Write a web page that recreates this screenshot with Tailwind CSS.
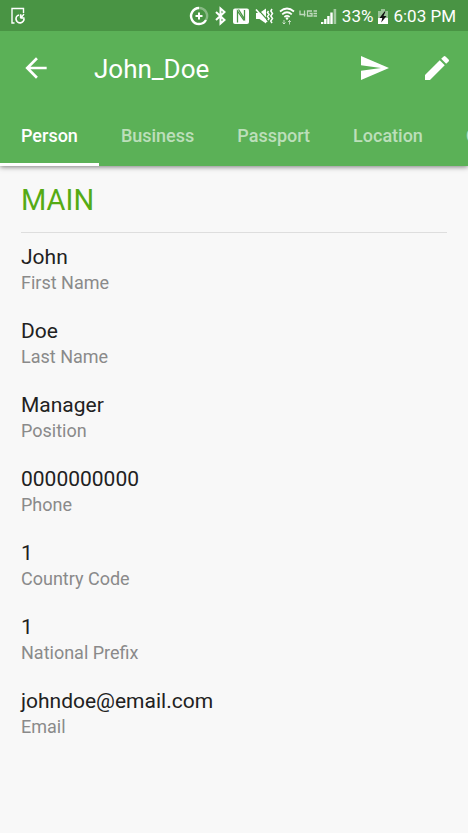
<!DOCTYPE html>
<html lang="en">
<head>
<meta charset="utf-8">
<meta name="viewport" content="width=device-width, initial-scale=1">
<title>John_Doe</title>
<script src="https://cdn.jsdelivr.net/npm/@tailwindcss/browser@4"></script>
</head>
<body class="min-h-screen overflow-x-hidden bg-[#f8f8f8] font-[Roboto,sans-serif] text-[#212121]">
<header class="bg-[#5bb157] text-white shadow-[0_1px_5px_rgba(0,0,0,0.5)]">
  <div class="flex h-[31px] items-center justify-between bg-[#499444] pr-3 pl-[11px]">
    <svg class="h-[18px] w-[15px]" viewBox="0 0 15 18" fill="none" stroke="#fff" stroke-width="1.4" aria-hidden="true">
      <path d="M3.5 16H1V1.5h11.500V6"/>
      <path d="M8 8A4 4 0 1 0 13 11.500" stroke-width="1.700"/>
      <path d="M9.500 11V7.200M9.500 11h0M10 11l3-4M10 7.500V11h3.500" stroke-width="1.300"/>
    </svg>
    <div class="flex items-center gap-1">
      <svg class="h-5 w-5" viewBox="0 0 20 20" fill="none" stroke="#fff" aria-hidden="true">
        <path d="M10 2A8 8 0 0 1 17 14" stroke-width="2.400" stroke-opacity=".35"/>
        <path d="M10 2A8 8 0 1 0 17 14" stroke-width="2.400"/>
        <path d="M10 6.500v7M6.500 10h7" stroke-width="2"/>
      </svg>
      <svg class="h-5 w-[15px]" viewBox="0 0 15 20" fill="none" stroke="#fff" stroke-width="2" aria-hidden="true">
        <path d="M3 6l8.500 8-4 3.500v-15l4 3.500L3 14"/>
      </svg>
      <svg class="h-5 w-[18px]" viewBox="0 0 18 20" aria-hidden="true">
        <rect x="1" y="2.500" width="16" height="15.500" rx="2" fill="#fff"/>
        <path d="M5.500 16.500V5l6.500 9.500M6.500 3.500L12.500 13V4" fill="none" stroke="#499444" stroke-width="1.300"/>
      </svg>
      <svg class="h-5 w-[21px]" viewBox="0 0 21 20" fill="none" stroke="#fff" aria-hidden="true">
        <path d="M2 7h3.500L12 2.500v15L5.500 13H2z" fill="#fff" stroke="none"/>
        <path d="M3 2.500l11 12" stroke="#499444" stroke-width="1.200"/>
        <path d="M2 3.500l11 12.500" stroke-width="1.700"/>
        <path d="M14.500 5l-1 1.500 1.500 2-1.500 2 1.500 2-1 1.500M18 3l-1.200 2 1.700 2.500-1.700 2.500 1.700 2.500-1.700 2.500 1.200 2" stroke-width="1.500"/>
      </svg>
      <svg class="h-5 w-4" viewBox="0 0 16 20" fill="none" stroke="#fff" stroke-width="1.700" aria-hidden="true">
        <path d="M1 5.500Q8-.5 15 5.500M3.200 8.300Q8 4.200 12.800 8.300M5.400 11Q8 8.800 10.600 11"/>
        <circle cx="8" cy="12.500" r="1.200" fill="#fff" stroke="none"/>
        <path d="M5 14v4M3.500 16.500L5 18l1.500-1.500M10.500 18.500v-4M9 16l1.500-1.500L12 16" stroke-width="1" stroke-opacity=".65"/>
      </svg>
      <svg class="h-5 w-[18px]" viewBox="0 0 18 20" fill="none" stroke="#fff" stroke-opacity=".65" stroke-width="1.300" role="img" aria-label="4G LTE">
        <path d="M1 4.500v4h5.500M5.500 4.500v6M13 5H8.500v5H13V7.500h-2.500M14.500 5H18M14.500 7.500H18M14.500 10H18"/>
      </svg>
      <svg class="h-5 w-[17px]" viewBox="0 0 17 20" fill="#fff" aria-hidden="true">
        <path d="M0 16h2.400v2H0zM3.100 13h2.400v5H3.100zM6.200 10h2.400v8H6.200zM9.300 6.500h2.400V18H9.300z"/>
        <path d="M12.600 3h2.600v15h-2.600z" fill-opacity=".5"/>
      </svg>
      <span class="text-[17px] leading-5">33%</span>
      <svg class="h-5 w-3" viewBox="0 0 12 20" aria-hidden="true">
        <path d="M4 3h4v2h3v7H1V5h3z" fill="#fff" fill-opacity=".45"/>
        <path d="M1 12h10v6H1z" fill="#fff"/>
        <path d="M7.500 5.500L2.500 12H5.300L4.200 16.500 9.500 10H6.500L8.500 5.500z" fill="#111"/>
      </svg>
      <time class="text-[17px] leading-5">6:03 PM</time>
    </div>
  </div>
  <div class="flex h-[73px] items-center pr-[15px] pl-5">
    <button type="button" aria-label="Back">
      <svg class="size-8" viewBox="0 0 24 24" fill="#fff"><path d="M20 11H7.830l5.590-5.590L12 4l-8 8 8 8 1.410-1.410L7.830 13H20v-2z"/></svg>
    </button>
    <h1 class="flex-1 pt-[2px] pl-[42px] text-[26px] leading-8">John_Doe</h1>
    <div class="flex items-center gap-[30px]">
      <button type="button" aria-label="Send">
        <svg class="size-8" viewBox="0 0 24 24" fill="#fff"><path d="M1.500 21L22.500 12 1.500 3v7l15 2-15 2z"/></svg>
      </button>
      <button type="button" aria-label="Edit">
        <svg class="size-8" viewBox="0 0 24 24" fill="#fff"><path d="M3 17.250V21h3.750L17.810 9.940l-3.750-3.750L3 17.250zM20.710 7.040a1 1 0 0 0 0-1.410l-2.340-2.340a1 1 0 0 0-1.410 0l-1.830 1.830 3.750 3.750 1.830-1.830z"/></svg>
      </button>
    </div>
  </div>
  <nav class="flex h-[62px] gap-px overflow-hidden text-[18px] leading-6 font-medium text-white/60" aria-label="Sections">
    <a href="#person" aria-current="page" class="flex shrink-0 items-center border-b-3 border-white px-[21px] pt-[5px] text-white">Person</a>
    <a href="#business" class="flex shrink-0 items-center px-[21px] pt-[2px]">Business</a>
    <a href="#passport" class="flex shrink-0 items-center px-[21px] pt-[2px]">Passport</a>
    <a href="#location" class="flex shrink-0 items-center px-[21px] pt-[2px]">Location</a>
    <a href="#contact" class="flex shrink-0 items-center px-[21px] pt-[2px]">Contact</a>
  </nav>
</header>
<main id="person" class="px-[21px] pt-4">
  <h2 class="border-b border-[#dedede] pb-[14px] text-[29px] leading-9 text-[#55ab15]">MAIN</h2>
  <dl class="flex flex-col gap-[22px] pt-[10px]">
    <div class="flex flex-col-reverse"><dt class="text-[18px] leading-6 text-[#8a8a8a]">First Name</dt><dd class="text-[21px] leading-7">John</dd></div>
    <div class="flex flex-col-reverse"><dt class="text-[18px] leading-6 text-[#8a8a8a]">Last Name</dt><dd class="text-[21px] leading-7">Doe</dd></div>
    <div class="flex flex-col-reverse"><dt class="text-[18px] leading-6 text-[#8a8a8a]">Position</dt><dd class="text-[21px] leading-7">Manager</dd></div>
    <div class="flex flex-col-reverse"><dt class="text-[18px] leading-6 text-[#8a8a8a]">Phone</dt><dd class="text-[21px] leading-7">0000000000</dd></div>
    <div class="flex flex-col-reverse"><dt class="text-[18px] leading-6 text-[#8a8a8a]">Country Code</dt><dd class="text-[21px] leading-7">1</dd></div>
    <div class="flex flex-col-reverse"><dt class="text-[18px] leading-6 text-[#8a8a8a]">National Prefix</dt><dd class="text-[21px] leading-7">1</dd></div>
    <div class="flex flex-col-reverse"><dt class="text-[18px] leading-6 text-[#8a8a8a]">Email</dt><dd class="text-[21px] leading-7">johndoe@email.com</dd></div>
  </dl>
</main>
</body>
</html>
